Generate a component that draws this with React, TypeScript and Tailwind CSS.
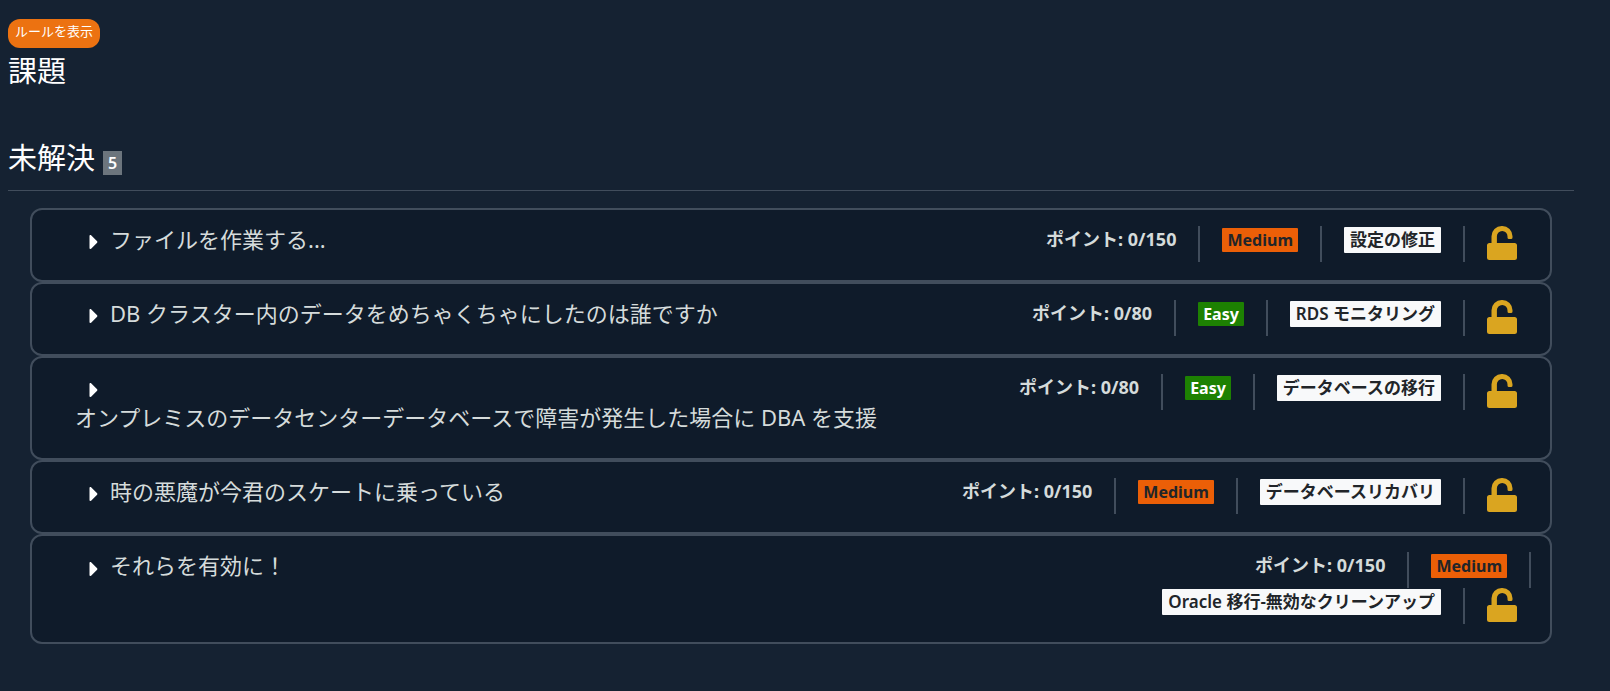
import React from "react";
import { FaCaretRight } from "react-icons/fa";

type Level = "Easy" | "Medium";

type Challenge = {
  id: number;
  title: string;
  points: string;
  level: Level;
  topic: string;
};

const challenges: Challenge[] = [
  { id: 1, title: "ファイルを作業する...", points: "0/150", level: "Medium", topic: "設定の修正" },
  {
    id: 2,
    title: "DB クラスター内のデータをめちゃくちゃにしたのは誰ですか",
    points: "0/80",
    level: "Easy",
    topic: "RDS モニタリング",
  },
  {
    id: 3,
    title: "オンプレミスのデータセンターデータベースで障害が発生した場合に DBA を支援",
    points: "0/80",
    level: "Easy",
    topic: "データベースの移行",
  },
  {
    id: 4,
    title: "時の悪魔が今君のスケートに乗っている",
    points: "0/150",
    level: "Medium",
    topic: "データベースリカバリ",
  },
  {
    id: 5,
    title: "それらを有効に！",
    points: "0/150",
    level: "Medium",
    topic: "Oracle 移行-無効なクリーンアップ",
  },
];

const levelStyles: Record<Level, string> = {
  Easy: "bg-[#1d8102] text-white",
  Medium: "bg-[#eb5f07] text-[#212529]",
};

const UnlockIcon = () => (
  <svg viewBox="0 0 30 34" className="w-[30px] h-[34px]" fill="#daa520" aria-hidden="true">
    <path d="M4.500 17V10.200A10.200 10.200 0 0 1 14.700 0h.600A10.200 10.200 0 0 1 25.500 10.200V11.500a1.500 1.500 0 0 1 -1.500 1.500h-2a1.500 1.500 0 0 1 -1.500 -1.500V10.200a5.200 5.200 0 0 0 -10.600 0V17H27.500a2.500 2.500 0 0 1 2.500 2.500v12a2.500 2.500 0 0 1 -2.500 2.500H2.500a2.500 2.500 0 0 1 -2.500 -2.500V19.500a2.500 2.500 0 0 1 2.500 -2.500z" />
  </svg>
);

const ChallengeRow = ({ item }: { item: Challenge }) => (
  <li className="flex items-start rounded-xl border-2 border-[#414d5c] bg-[#0f1b2a] pt-[14px] pb-[18px] pl-[43px] pr-[19px]">
    <h3 className="min-w-0 flex-1 pb-2 pr-5 text-[22px] leading-[30px] text-[#d5dbdb]">
      <FaCaretRight className="inline-block w-4 h-6 ml-[11px] mr-2 align-middle text-white" />
      <span className="inline-block">{item.title}</span>
    </h3>
    <div className="flex w-[42%] flex-wrap justify-end pt-[2px] font-semibold">
      <div className="h-9 border-r-2 border-[#414d5c] px-[22px] text-lg font-bold leading-[26px] text-[#d5dbdb]">
        ポイント: {item.points}
      </div>
      <div className="h-9 border-r-2 border-[#414d5c] px-[22px] pt-[2px]">
        <span
          className={`block rounded-[1px] px-[5px] text-base font-bold leading-6 ${levelStyles[item.level]}`}>
          {item.level}
        </span>
      </div>
      <div className="h-9 border-r-2 border-[#414d5c] px-[22px] pt-px">
        <span className="block rounded-[1px] bg-[#f8f9fa] px-[6px] text-[17px] leading-[26px] text-[#212529]">
          {item.topic}
        </span>
      </div>
      <div className="h-9 pl-[22px] pr-[14px]">
        <UnlockIcon />
      </div>
    </div>
  </li>
);

const App = () => {
  return (
    <main
      lang="ja"
      className="min-h-screen bg-[#152232] pt-[19px] pb-12 pl-2 pr-9 font-['Noto_Sans','Noto_Sans_CJK_JP',sans-serif] text-white">
      <button
        type="button"
        className="block rounded-xl bg-[#ec7211] px-[7px] pb-1 text-[13px] leading-[25px] text-white">
        ルールを表示
      </button>
      <h1 className="pt-[3px] text-[29px] leading-10">課題</h1>
      <section className="mt-11">
        <h2 className="flex items-center border-b border-[#414d5c] pb-[9px] text-[29px] leading-[46px]">
          未解決
          <span className="ml-2 mt-[10px] bg-[#6c757d] px-[5px] text-base font-semibold leading-6">
            {challenges.length}
          </span>
        </h2>
        <ul className="mt-[17px] mx-[22px]">
          {challenges.map((item) => (
            <ChallengeRow key={item.id} item={item} />
          ))}
        </ul>
      </section>
    </main>
  );
};

export default App;
